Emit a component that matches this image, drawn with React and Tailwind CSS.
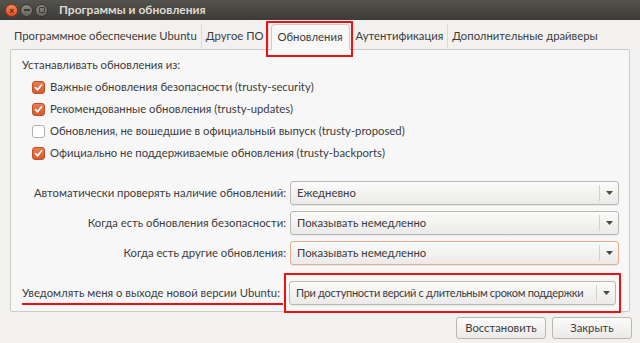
import { useState } from "react";

const font = { fontFamily: 'Lato, "Open Sans", sans-serif' };

function Check({ checked, label }) {
  return (
    <div className="flex items-center h-[22px] gap-[5px]">
      {checked ? (
        <span className="w-[13px] h-[13px] rounded-[3px] bg-gradient-to-b from-[#ee7a4c] to-[#d95a2b] border border-[#c04f25] flex items-center justify-center">
          <svg width="9" height="9" viewBox="0 0 9 9">
            <path d="M1.5 4.6 L3.6 6.8 L7.6 1.8" stroke="#fff" strokeWidth="1.7" fill="none" strokeLinecap="round" strokeLinejoin="round" />
          </svg>
        </span>
      ) : (
        <span className="w-[13px] h-[13px] rounded-[3px] bg-white border border-[#b3b0ab]" />
      )}
      <span>{label}</span>
    </div>
  );
}

function Combo({ value, focus, className = "", textClass = "" }) {
  return (
    <div
      className={
        "h-[24px] flex items-center rounded-[3px] border bg-gradient-to-b from-[#fbfbfa] to-[#ebeae8] shadow-[0_1px_0_rgba(0,0,0,0.06)] " +
        (focus ? "border-[#e9a98c] " : "border-[#bbb8b3] ") +
        className
      }
    >
      <span className={"flex-1 pl-[6px] overflow-hidden " + textClass}>{value}</span>
      <span className="w-px h-[16px] bg-[#d3d1cd]" />
      <span className="w-[18px] flex justify-center">
        <svg width="7" height="4" viewBox="0 0 7 4">
          <path d="M0 0 H7 L3.5 4 Z" fill="#4a4a4a" />
        </svg>
      </span>
    </div>
  );
}

export default function App() {
  const [tab] = useState("updates");
  const tabs = [
    ["ubuntu", "Программное обеспечение Ubuntu"],
    ["other", "Другое ПО"],
    ["updates", "Обновления"],
    ["auth", "Аутентификация"],
    ["drivers", "Дополнительные драйверы"],
  ];

  return (
    <div className="w-[640px] h-[343px] bg-[#f2f1f0] overflow-hidden text-[11.3px] text-[#3c3c3c] whitespace-nowrap" style={font}>
      {/* title bar */}
      <div className="h-[20px] bg-gradient-to-b from-[#55534d] to-[#3c3b37] flex items-center pl-[5px]">
        <div className="flex items-center gap-[2px]">
          <span className="w-[13px] h-[13px] rounded-full bg-gradient-to-b from-[#f58a5c] to-[#df4a16] border border-[#8c3513] flex items-center justify-center text-[9px] leading-none text-[#5a1d07] font-bold">×</span>
          <span className="w-[13px] h-[13px] rounded-full bg-gradient-to-b from-[#8a8780] to-[#66645e] border border-[#34332f] flex items-center justify-center">
            <span className="w-[6px] h-[2px] bg-[#3c3b37]" />
          </span>
          <span className="w-[13px] h-[13px] rounded-full bg-gradient-to-b from-[#8a8780] to-[#66645e] border border-[#34332f] flex items-center justify-center">
            <span className="w-[6px] h-[6px] border border-[#3c3b37] rounded-[1px]" />
          </span>
        </div>
        <span className="ml-[11px] font-bold text-[#dfdbd2] text-[12px]">Программы и обновления</span>
      </div>

      <div className="px-[10px]">
        {/* tabs */}
        <div className="h-[29px] flex items-end">
          {tabs.map(([id, label]) =>
            id === tab ? (
              <div key={id} className="relative shrink-0 h-[26px] px-[6px] flex items-center bg-[#f7f7f7] border border-b-0 border-[#cdcbc7] rounded-t-[4px] mx-[2px] -mb-px z-10">
                {label}
                <span className="absolute -left-[6px] -right-[4px] -top-[4px] -bottom-[7px] border-2 border-[#ee1111]" />
              </div>
            ) : (
              <div key={id} className="shrink-0 h-[24px] px-[4px] flex items-center border-r border-[#dcdad6] last:border-r-0 mb-[1px]">
                {label}
              </div>
            )
          )}
        </div>

        {/* panel */}
        <div className="h-[263px] bg-[#f7f7f7] border border-[#cdcbc7] rounded-[2px] pt-[5px] pl-[11px] pr-[10px]">
          <div className="h-[20px] flex items-center">Устанавливать обновления из:</div>
          <div className="pl-[10px] mt-px">
            <Check checked label="Важные обновления безопасности (trusty-security)" />
            <Check checked label="Рекомендованные обновления (trusty-updates)" />
            <Check label="Обновления, не вошедшие в официальный выпуск (trusty-proposed)" />
            <Check checked label="Официально не поддерживаемые обновления (trusty-backports)" />
          </div>

          <div className="mt-[17px] flex flex-col gap-[6px]">
            {[
              ["Автоматически проверять наличие обновлений:", "Ежедневно", false],
              ["Когда есть обновления безопасности:", "Показывать немедленно", false],
              ["Когда есть другие обновления:", "Показывать немедленно", true],
            ].map(([l, v, f]) => (
              <div key={l} className="flex items-center gap-[4px]">
                <span className="w-[264px] shrink-0 text-right">{l}</span>
                <Combo value={v} focus={f} className="flex-1" />
              </div>
            ))}
          </div>

          <div className="mt-[16px] flex items-center">
            <span className="relative w-[267px] shrink-0">
              Уведомлять меня о выходе новой версии Ubuntu:
              <span className="absolute left-0 right-[6px] -bottom-[4px] h-[2px] bg-[#ee1111]" />
            </span>
            <div className="relative flex-1 min-w-0 mr-[3px]">
              <Combo value="При доступности версий с длительным сроком поддержки" textClass="text-[11px] tracking-[-0.3px]" />
              <span className="absolute -left-[5px] -right-[5px] -top-[8px] -bottom-[8px] border-2 border-[#ee1111]" />
            </div>
          </div>
        </div>

        {/* buttons */}
        <div className="flex justify-end gap-[6px] mt-[5px] -mr-[2px]">
          {["Восстановить", "Закрыть"].map((b) => (
            <button key={b} className="h-[22px] w-[90px] last:w-[80px] rounded-[3px] border border-[#bbb8b3] bg-gradient-to-b from-[#fbfbfa] to-[#ebeae8]">
              {b}
            </button>
          ))}
        </div>
      </div>
    </div>
  );
}
